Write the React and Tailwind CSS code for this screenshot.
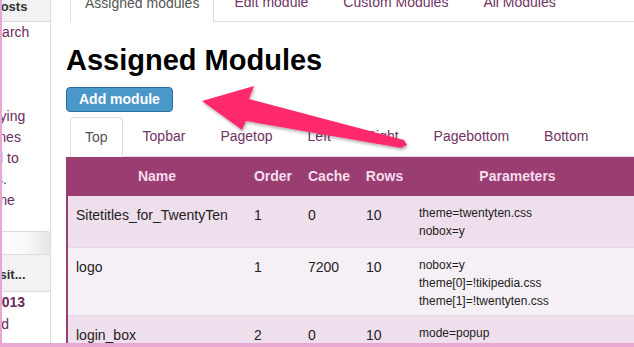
import React from 'react';

const topTabs = ['Assigned modules', 'Edit module', 'Custom Modules', 'All Modules'];
const zoneTabs = ['Top', 'Topbar', 'Pagetop', 'Left', 'Right', 'Pagebottom', 'Bottom'];

const modules = [
  {
    name: 'Sitetitles_for_TwentyTen', order: 1, cache: 0, rows: 10,
    params: ['theme=twentyten.css', 'nobox=y'],
    rowClass: 'bg-[#efdeeb] h-[51px]',
  },
  {
    name: 'logo', order: 1, cache: 7200, rows: 10,
    params: ['nobox=y', 'theme[0]=!tikipedia.css', 'theme[1]=!twentyten.css'],
    rowClass: 'bg-[#f6eff5] h-[68px]',
  },
  {
    name: 'login_box', order: 2, cache: 0, rows: 10,
    params: ['mode=popup'],
    rowClass: 'bg-[#efdeeb] h-[40px]',
  },
];

// the side column is scrolled, only the right end of each line shows
const Sidebar = () => (
  <aside className="w-[49px] shrink-0 border-r border-[#dcdcdc] overflow-hidden text-[14px]">
    <div className="bg-white border-b border-[#dddddd] rounded-br-[4px]">
      <div className="h-[37px] -mt-[15px] pt-[7px] flex items-center bg-[#f2f2f2] border-b border-[#dddddd] font-bold text-[13px] text-[#333] whitespace-nowrap">
        <span className="-ml-[10px]">Posts</span>
      </div>
      <div className="text-[#6a2a5c] leading-[21px] whitespace-nowrap pb-[20px]">
        <div className="-ml-[17px]">Search</div>
        <div>&nbsp;</div>
        <div>&nbsp;</div>
        <div>&nbsp;</div>
        <div className="-ml-[39px]">displaying</div>
        <div className="-ml-[27px]">themes</div>
        <div className="-ml-[30px]">need to</div>
        <div className="-ml-[27px]">links.</div>
        <div className="-ml-[26px]">theme</div>
      </div>
    </div>
    <div className="h-[22px] bg-linear-to-r from-white via-[#f8f8f8] to-[#e6e6e6]" />
    <div className="bg-white border-t border-[#dddddd]">
      <div className="h-[37px] pt-[3px] flex items-center bg-[#f2f2f2] border-b border-[#dddddd] font-bold text-[13px] text-[#333] whitespace-nowrap">
        <span className="-ml-[35px]">Deposit...</span>
      </div>
      <div className="text-[#6a2a5c] leading-[21px] whitespace-nowrap">
        <div className="-ml-[8px] font-bold">2013</div>
        <div className="-ml-[46px] mt-[1px]">Updated</div>
      </div>
    </div>
  </aside>
);

const Tabs = ({ items, className }) => (
  <ul className={`flex gap-[5px] border-b border-[#dddddd] text-[14px] ${className}`}>
    {items.map((t, i) => (
      <li
        key={t}
        className={
          i === 0
            ? 'flex items-center px-[14px] -mb-px bg-white border border-[#dddddd] border-b-white rounded-t-[4px] text-[#555555]'
            : 'flex items-center px-[14px] border border-transparent text-[#6f3363]'
        }
      >
        {t}
      </li>
    ))}
  </ul>
);

const Arrow = () => (
  <svg className="absolute left-0 top-0 pointer-events-none" width="634" height="347" viewBox="0 0 634 347">
    <defs>
      <filter id="arrowShadow" x="-10%" y="-20%" width="130%" height="160%">
        <feDropShadow dx="1" dy="2" stdDeviation="1.5" floodColor="#000" floodOpacity="0.3" />
      </filter>
    </defs>
    <polygon
      points="200,101 252,86 247,99 402,140 405,145 399,148 244,121 240,130"
      fill="#fe2c6c"
      filter="url(#arrowShadow)"
    />
  </svg>
);

export default function App() {
  return (
    <div className="relative w-[634px] h-[347px] overflow-hidden bg-white flex border-l-2 border-b-4 border-[#e8a8d2] font-['Liberation_Sans',Arial,sans-serif] text-[#222]">
      <Sidebar />

      <main className="flex-1 min-w-0 overflow-hidden">
        <Tabs items={topTabs} className="ml-[19px] h-[38px] -mt-[16px]" />

        <h1 className="ml-[15px] mt-[21px] text-[29px] leading-[34px] font-bold text-black">Assigned Modules</h1>

        <button
          type="button"
          className="ml-[15px] mt-[10px] h-[25px] px-[12px] bg-[#4a97c9] border border-[#2f6f9c] rounded-[4px] text-white font-bold text-[14px] leading-[17px]"
        >
          Add module
        </button>

        <Tabs items={zoneTabs} className="ml-[19px] mt-[5px] h-[40px]" />

        {/* modules table, wider than the window */}
        <div className="ml-[15px] w-[618px] border-l-2 border-[#9a3d70]">
          <table className="table-fixed w-[616px] border-collapse text-[14px]">
            <colgroup>
              <col className="w-[178px]" />
              <col className="w-[54px]" />
              <col className="w-[58px]" />
              <col className="w-[53px]" />
              <col className="w-[213px]" />
              <col className="w-[60px]" />
            </colgroup>
            <thead>
              <tr className="bg-[#9a3d70] h-[39px] text-[#f5dcee] font-bold">
                <th className="text-center">Name</th>
                <th className="text-center">Order</th>
                <th className="text-center">Cache</th>
                <th className="text-center">Rows</th>
                <th className="text-center">Parameters</th>
                <th />
              </tr>
            </thead>
            <tbody>
              {modules.map((m) => (
                <tr key={m.name} className={`${m.rowClass} border-b border-[#e3d9e1]`}>
                  <td className="align-top px-2 pt-[7px] leading-[24px]">{m.name}</td>
                  <td className="align-top px-2 pt-[7px] leading-[24px]">{m.order}</td>
                  <td className="align-top px-2 pt-[7px] leading-[24px]">{m.cache}</td>
                  <td className="align-top px-2 pt-[7px] leading-[24px]">{m.rows}</td>
                  <td className="align-top px-2 pt-[8px] text-[12px] leading-[18px]">
                    {m.params.map((p) => (
                      <div key={p}>{p}</div>
                    ))}
                  </td>
                  <td />
                </tr>
              ))}
            </tbody>
          </table>
        </div>
      </main>

      <Arrow />
    </div>
  );
}
